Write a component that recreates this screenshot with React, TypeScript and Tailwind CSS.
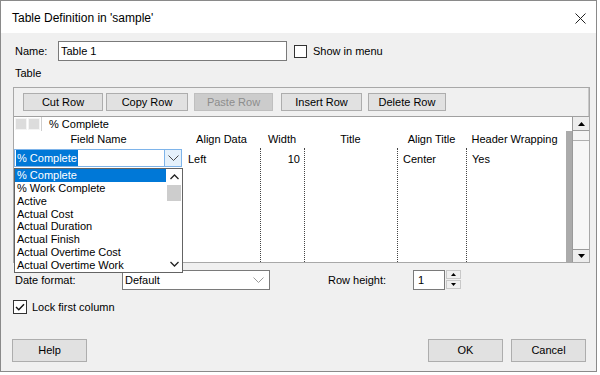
import React from 'react';

const listItems = [
  '% Complete',
  '% Work Complete',
  'Active',
  'Actual Cost',
  'Actual Duration',
  'Actual Finish',
  'Actual Overtime Cost',
  'Actual Overtime Work',
];

function Chevron({ color = '#555' }: { color?: string }) {
  return (
    <svg width="11" height="7" viewBox="0 0 11 7">
      <polyline points="0.5,0.5 5.5,5.5 10.5,0.5" fill="none" stroke={color} strokeWidth="1" />
    </svg>
  );
}

function Btn({ label, w, disabled }: { label: string; w: string; disabled?: boolean }) {
  return (
    <div
      className={`${w} h-[18px] flex items-center justify-center border ${
        disabled ? 'border-[#bfbfbf] bg-[#cccccc] text-[#8d8d8d]' : 'border-[#adadad] bg-[#e1e1e1]'
      }`}
    >
      {label}
    </div>
  );
}

function Tri({ up }: { up?: boolean }) {
  return (
    <svg width="7" height="4" viewBox="0 0 7 4">
      <polygon points={up ? '0,4 7,4 3.5,0' : '0,0 7,0 3.5,4'} fill="#000" />
    </svg>
  );
}

export default function App() {
  return (
    <div className="w-[600px] h-[375px] bg-white font-['Liberation_Sans',Arial,sans-serif] text-[11px] text-black leading-none">
      <div className="w-[597px] h-[372px] border border-[#8a8a8a] bg-[#f0f0f0] flex flex-col">
        {/* title bar */}
        <div className="h-[32px] bg-white flex items-center justify-between pl-[11px] pr-[10px] text-[12px]">
          <span className="mt-[1px]">Table Definition in 'sample'</span>
          <svg width="11" height="11" viewBox="0 0 11 11" className="mt-[3px]">
            <path d="M0.5 0.5 L10.5 10.5 M10.5 0.5 L0.5 10.5" stroke="#222" strokeWidth="1" />
          </svg>
        </div>

        <div className="relative flex-1 pl-[12px] pr-[10px]">
          {/* name row */}
          <div className="mt-[8px] h-[20px] flex items-center">
            <span className="ml-[2px] w-[43px]">Name:</span>
            <div className="w-[229px] h-[20px] border border-[#7a7a7a] bg-white flex items-center pl-[2px]">
              Table 1
            </div>
            <div className="ml-[7px] w-[13px] h-[13px] border border-[#333] bg-white" />
            <span className="ml-[6px]">Show in menu</span>
          </div>

          <div className="mt-[5px] h-[14px] ml-[2px] flex items-center">Table</div>

          {/* table frame */}
          <div className="mt-[7px] w-[577px] h-[176px] border border-[#a8a8a8] flex flex-col">
            <div className="h-[28px] pt-[5px] pl-[9px] flex items-start border-r border-[#c8c8c8]">
              <Btn label="Cut Row" w="w-[80px]" />
              <div className="w-[3px]" />
              <Btn label="Copy Row" w="w-[82px]" />
              <div className="w-[6px]" />
              <Btn label="Paste Row" w="w-[79px]" disabled />
              <div className="w-[8px]" />
              <Btn label="Insert Row" w="w-[81px]" />
              <div className="w-[6px]" />
              <Btn label="Delete Row" w="w-[78px]" />
            </div>

            {/* sheet */}
            <div className="flex-1 flex border-t border-[#a0a0a0]">
              <div className="relative w-[552px] flex flex-col">
                <div className="h-[14px] flex items-center bg-white">
                  <div className="w-[12px] h-[12px] ml-[1px] bg-[#dcdcdc] border border-[#f4f4f4]" />
                  <div className="w-[12px] h-[12px] ml-[1px] bg-[#dcdcdc] border border-[#f4f4f4]" />
                  <div className="flex-1 h-[14px] ml-[1px] border-l border-[#cfcfcf] flex items-center pl-[7px]">
                    % Complete
                  </div>
                </div>
                <div className="flex-1 bg-white grid grid-cols-[169px_77px_44px_93px_69px_99px] grid-rows-[17px_1fr]">
                  <div className="flex items-center justify-center">Field Name</div>
                  <div className="flex items-center justify-center">Align Data</div>
                  <div className="flex items-center justify-center">Width</div>
                  <div className="flex items-center justify-center">Title</div>
                  <div className="flex items-center justify-center">Align Title</div>
                  <div className="flex items-center justify-center pr-[2px]">Header Wrapping</div>

                  <div className="pt-[1px]">
                    <div className="w-[168px] h-[18px] border border-[#7eb4ea] bg-white flex items-center">
                      <div className="flex-1 pl-[1px]">
                        <span className="bg-[#0078d7] text-white px-[1px] py-[2px]">% Complete</span>
                      </div>
                      <div className="w-[17px] h-[16px] bg-[#e5f1fb] border-l border-[#7eb4ea] flex items-center justify-center">
                        <Chevron color="#4a4a4a" />
                      </div>
                    </div>
                  </div>
                  <div className="pl-[5px] pt-[6px]">Left</div>
                  <div className="border-l border-dotted border-[#444] text-right pr-[4px] pt-[6px]">10</div>
                  <div className="border-l border-dotted border-[#444]" />
                  <div className="border-l border-dotted border-[#444] pl-[5px] pt-[6px]">Center</div>
                  <div className="border-l border-dotted border-[#444] pl-[5px] pt-[6px]">Yes</div>
                </div>

                {/* open dropdown list */}
                <div className="absolute left-[0px] top-[51px] w-[169px] h-[105px] border border-[#646464] bg-white flex z-10">
                  <div className="flex-1 flex flex-col">
                    {listItems.map((it, i) => (
                      <div
                        key={it}
                        className={`h-[13px] flex items-center pl-[2px] ${i === 0 ? 'bg-[#0078d7] text-white' : ''}`}
                      >
                        {it}
                      </div>
                    ))}
                  </div>
                  <div className="w-[16px] flex flex-col items-center">
                    <div className="h-[16px] flex items-center justify-center">
                      <svg width="9" height="6" viewBox="0 0 9 6">
                        <polyline points="0.5,5 4.5,1 8.5,5" fill="none" stroke="#222" strokeWidth="1.3" />
                      </svg>
                    </div>
                    <div className="w-[14px] h-[16px] bg-[#cdcdcd]" />
                    <div className="flex-1" />
                    <div className="h-[16px] flex items-center justify-center">
                      <svg width="9" height="6" viewBox="0 0 9 6">
                        <polyline points="0.5,1 4.5,5 8.5,1" fill="none" stroke="#222" strokeWidth="1.3" />
                      </svg>
                    </div>
                  </div>
                </div>
              </div>

              <div className="w-[6px] flex flex-col">
                <div className="h-[14px] bg-white" />
                <div className="flex-1 bg-[#ababab]" />
              </div>
              <div className="w-[17px] flex flex-col border-l border-[#9a9a9a] bg-[#f7f7f7]">
                <div className="h-[14px] bg-[#ededed] border-b border-[#9a9a9a] flex items-center justify-center">
                  <Tri up />
                </div>
                <div className="h-[10px] border-b border-[#b0b0b0] bg-[#f4f4f4]" />
                <div className="flex-1" />
                <div className="h-[13px] bg-[#ededed] border-t border-[#9a9a9a] flex items-center justify-center">
                  <Tri />
                </div>
              </div>
            </div>
          </div>

          {/* date format / row height */}
          <div className="mt-[7px] h-[20px] flex items-center">
            <span className="ml-[2px] w-[107px]">Date format:</span>
            <div className="w-[148px] h-[20px] border border-[#7a7a7a] bg-white flex items-center justify-between pl-[2px] pr-[5px]">
              <span>Default</span>
              <Chevron color="#9a9a9a" />
            </div>
            <span className="ml-[58px] w-[85px]">Row height:</span>
            <div className="w-[32px] h-[20px] border border-[#7a7a7a] bg-white flex items-center pl-[4px]">1</div>
            <div className="ml-[1px] w-[15px] h-[20px] flex flex-col gap-[1px]">
              <div className="h-[9px] border border-[#c8c8c8] bg-[#f0f0f0] flex items-center justify-center">
                <svg width="5" height="3" viewBox="0 0 5 3"><polygon points="0,3 5,3 2.5,0" fill="#000" /></svg>
              </div>
              <div className="h-[9px] border border-[#c8c8c8] bg-[#f0f0f0] flex items-center justify-center">
                <svg width="5" height="3" viewBox="0 0 5 3"><polygon points="0,0 5,0 2.5,3" fill="#000" /></svg>
              </div>
            </div>
          </div>

          {/* lock first column */}
          <div className="mt-[10px] h-[14px] flex items-center">
            <div className="w-[14px] h-[14px] border border-[#333] bg-white flex items-center justify-center">
              <svg width="10" height="8" viewBox="0 0 10 8">
                <polyline points="1,4 3.8,6.8 9,1.2" fill="none" stroke="#111" strokeWidth="1.4" />
              </svg>
            </div>
            <span className="ml-[5px]">Lock first column</span>
          </div>

          {/* bottom buttons */}
          <div className="mt-[25px] flex items-center">
            <div className="-ml-[1px] w-[75px] h-[23px] border border-[#adadad] bg-[#e1e1e1] flex items-center justify-center">
              Help
            </div>
            <div className="flex-1" />
            <div className="w-[75px] h-[23px] border border-[#adadad] bg-[#e1e1e1] flex items-center justify-center">
              OK
            </div>
            <div className="ml-[8px] w-[75px] h-[23px] border border-[#adadad] bg-[#e1e1e1] flex items-center justify-center">
              Cancel
            </div>
          </div>
        </div>
      </div>
    </div>
  );
}
